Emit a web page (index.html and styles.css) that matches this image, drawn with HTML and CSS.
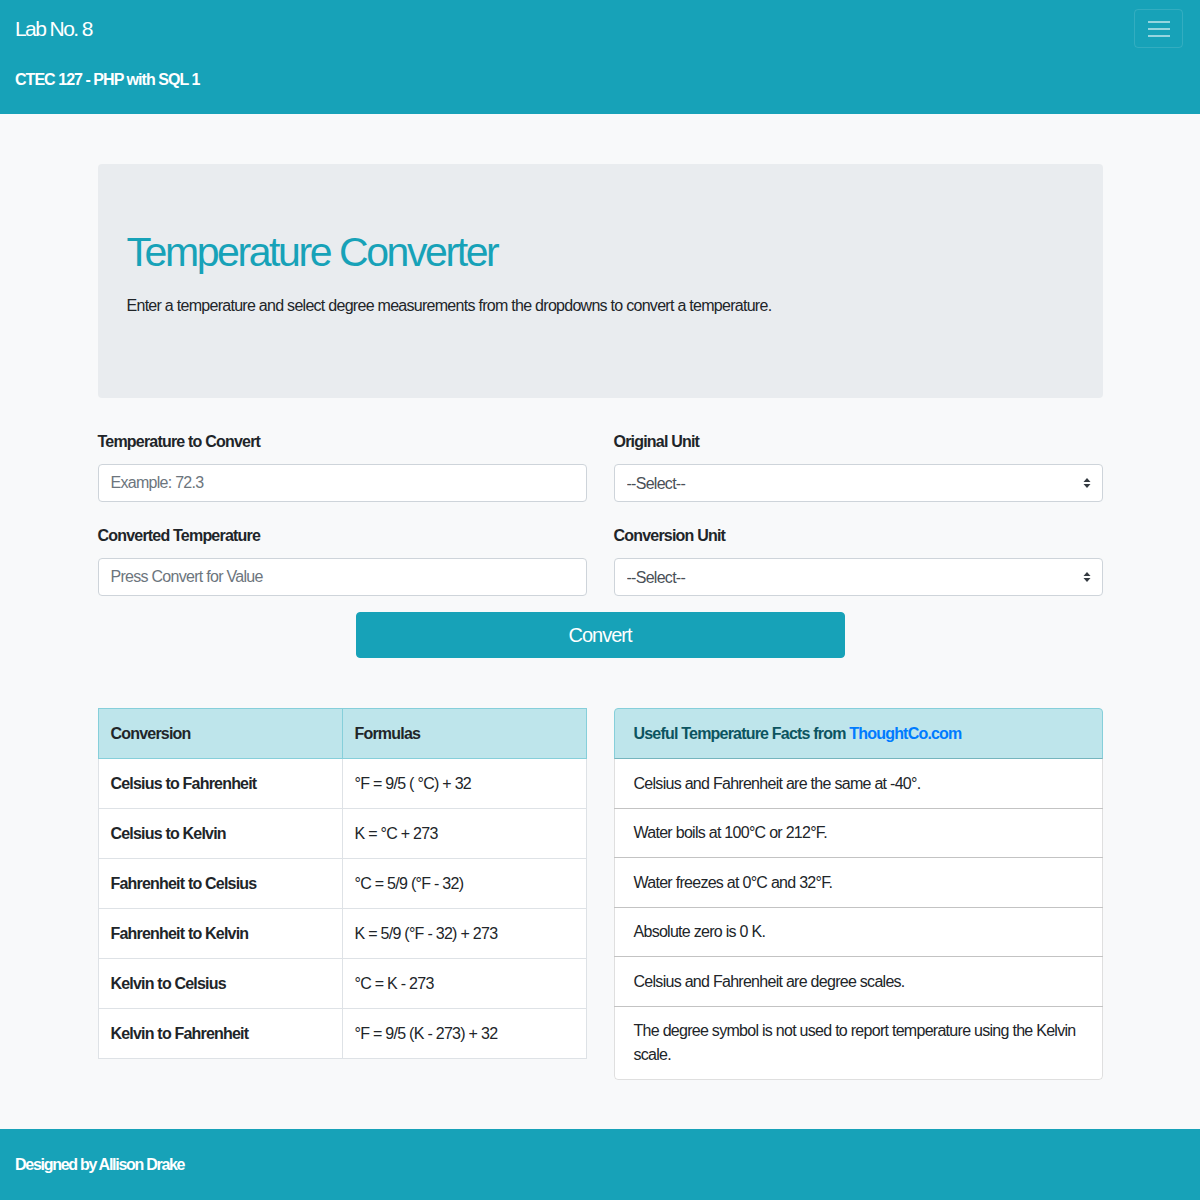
FILE: index.html
```html
<!DOCTYPE html>
<html lang="en">
<head>
<meta charset="utf-8">
<title>Lab No. 8</title>
<link rel="stylesheet" href="styles.css">
</head>
<body>
<header class="site-header">
  <div class="brand-block">
    <div class="brand">Lab No. 8</div>
    <div class="course">CTEC 127 - PHP with SQL 1</div>
  </div>
  <button class="toggler" type="button" aria-label="Toggle navigation">
    <svg width="22" height="18" viewBox="0 0 22 18"><path d="M0 2h22M0 9h22M0 16h22" stroke="rgba(255,255,255,0.55)" stroke-width="2"/></svg>
  </button>
</header>

<main class="container">
  <section class="jumbotron">
    <h1 class="title">Temperature Converter</h1>
    <p class="lead">Enter a temperature and select degree measurements from the dropdowns to convert a temperature.</p>
  </section>

  <form class="converter">
    <div class="form-grid">
      <div class="field">
        <label class="label" for="temp">Temperature to Convert</label>
        <input class="control" id="temp" type="text" placeholder="Example: 72.3">
      </div>
      <div class="field">
        <label class="label" for="orig">Original Unit</label>
        <div class="select-wrap">
          <select class="control select" id="orig"><option>--Select--</option></select>
          <svg class="select-arrow" width="8" height="10" viewBox="0 0 8 10"><path d="M4 0L7.5 4H0.5Z M4 10L7.5 6H0.5Z" fill="#343a40"/></svg>
        </div>
      </div>
      <div class="field">
        <label class="label" for="conv">Converted Temperature</label>
        <input class="control" id="conv" type="text" placeholder="Press Convert for Value">
      </div>
      <div class="field">
        <label class="label" for="unit">Conversion Unit</label>
        <div class="select-wrap">
          <select class="control select" id="unit"><option>--Select--</option></select>
          <svg class="select-arrow" width="8" height="10" viewBox="0 0 8 10"><path d="M4 0L7.5 4H0.5Z M4 10L7.5 6H0.5Z" fill="#343a40"/></svg>
        </div>
      </div>
    </div>
    <div class="btn-row">
      <button class="btn-convert" type="button">Convert</button>
    </div>
  </form>

  <div class="info-grid">
    <table class="formulas">
      <thead>
        <tr><th>Conversion</th><th>Formulas</th></tr>
      </thead>
      <tbody>
        <tr><th>Celsius to Fahrenheit</th><td>°F = 9/5 ( °C) + 32</td></tr>
        <tr><th>Celsius to Kelvin</th><td>K = °C + 273</td></tr>
        <tr><th>Fahrenheit to Celsius</th><td>°C = 5/9 (°F - 32)</td></tr>
        <tr><th>Fahrenheit to Kelvin</th><td>K = 5/9 (°F - 32) + 273</td></tr>
        <tr><th>Kelvin to Celsius</th><td>°C = K - 273</td></tr>
        <tr><th>Kelvin to Fahrenheit</th><td>°F = 9/5 (K - 273) + 32</td></tr>
      </tbody>
    </table>

    <ul class="facts">
      <li class="facts-head">Useful Temperature Facts from <a class="link" href="#">ThoughtCo.com</a></li>
      <li class="fact">Celsius and Fahrenheit are the same at -40°.</li>
      <li class="fact">Water boils at 100°C or 212°F.</li>
      <li class="fact">Water freezes at 0°C and 32°F.</li>
      <li class="fact">Absolute zero is 0 K.</li>
      <li class="fact">Celsius and Fahrenheit are degree scales.</li>
      <li class="fact">The degree symbol is not used to report temperature using the Kelvin scale.</li>
    </ul>
  </div>
</main>

<footer class="site-footer">Designed by Allison Drake</footer>
</body>
</html>
```

FILE: styles.css
```css
* { box-sizing: border-box; }

html, body {
  margin: 0;
  padding: 0;
}

body {
  background: #f8f9fa;
  color: #212529;
  font-family: "Liberation Sans", Arial, sans-serif;
  font-size: 16px;
  line-height: 24px;
  letter-spacing: -0.045em;
}

/* Header */
.site-header {
  background: #17a2b8;
  color: #fff;
  height: 114px;
  padding: 9px 17px 0 15px;
  display: flex;
  justify-content: space-between;
  align-items: flex-start;
}

.brand-block {
  display: flex;
  flex-direction: column;
  gap: 24px;
  padding-top: 5px;
}

.brand {
  font-size: 21px;
  line-height: 30px;
  letter-spacing: -0.075em;
}

.course {
  font-size: 16px;
  font-weight: bold;
  line-height: 24px;
  letter-spacing: -0.06em;
}

.toggler {
  width: 49px;
  height: 39px;
  background: transparent;
  border: 1px solid rgba(255,255,255,0.12);
  border-radius: 4px;
  display: flex;
  align-items: center;
  justify-content: center;
  padding: 0;
}

/* Main */
.container {
  width: 1005px;
  margin: 0 auto;
  padding-top: 50px;
}

.jumbotron {
  background: #e9ecef;
  border-radius: 4px;
  padding: 64px 29px;
  margin-bottom: 32px;
}

.title {
  margin: 0 0 18px;
  font-size: 41px;
  line-height: 48px;
  font-weight: normal;
  color: #17a2b8;
  letter-spacing: -0.059em;
}

.lead {
  margin: 0 0 16px;
}

.form-grid {
  display: grid;
  grid-template-columns: 1fr 1fr;
  column-gap: 27px;
  row-gap: 22px;
}

.field {
  display: flex;
  flex-direction: column;
}

.label {
  font-weight: bold;
  margin-bottom: 10px;
  letter-spacing: -0.05em;
}

.control {
  height: 38px;
  width: 100%;
  border: 1px solid #ced4da;
  border-radius: 4px;
  background: #fff;
  padding: 6px 12px;
  font-family: inherit;
  font-size: 16px;
  letter-spacing: -0.045em;
  color: #495057;
}

.control::placeholder {
  color: #6c757d;
  opacity: 1;
}

.select-wrap {
  position: relative;
}

.select {
  appearance: none;
  -webkit-appearance: none;
  color: #495057;
}

.select-arrow {
  position: absolute;
  right: 12px;
  top: 14px;
  pointer-events: none;
}

.btn-row {
  display: flex;
  justify-content: center;
  margin-top: 16px;
}

.btn-convert {
  width: 489px;
  height: 46px;
  background: #17a2b8;
  border: 1px solid #17a2b8;
  border-radius: 4px;
  color: #fff;
  font-family: inherit;
  font-size: 20px;
  letter-spacing: -0.05em;
}

/* Info */
.info-grid {
  display: grid;
  grid-template-columns: 1fr 1fr;
  column-gap: 27px;
  align-items: start;
  margin-top: 50px;
}

.formulas {
  width: 100%;
  border-collapse: collapse;
  background: #fff;
  table-layout: fixed;
}

.formulas th,
.formulas td {
  border: 1px solid #dee2e6;
  padding: 13px 12px 12px;
  text-align: left;
  line-height: 24px;
  vertical-align: top;
}

.formulas th {
  font-weight: bold;
  letter-spacing: -0.05em;
}

.formulas thead th {
  background: #bee5eb;
  border-color: #86cfda;
}

.facts {
  list-style: none;
  margin: 0;
  padding: 0;
  background: #fff;
  border-radius: 4px;
}

.facts-head,
.fact {
  border: 1px solid rgba(0,0,0,0.125);
  padding: 12.5px 19px 12px;
  margin-bottom: -1px;
}

.facts-head {
  background: #bee5eb;
  border-color: #86cfda;
  font-weight: bold;
  color: #0c5460;
  padding: 13px 19px 12px;
  border-radius: 4px 4px 0 0;
  letter-spacing: -0.05em;
}

.fact:last-child {
  border-radius: 0 0 4px 4px;
  margin-bottom: 0;
  padding: 12px 19px;
}

.link {
  color: #007bff;
  text-decoration: none;
}

/* Footer */
.site-footer {
  margin-top: 49px;
  background: #17a2b8;
  color: #fff;
  font-weight: bold;
  padding: 24px 15px;
  height: 72px;
  letter-spacing: -0.08em;
}
```
